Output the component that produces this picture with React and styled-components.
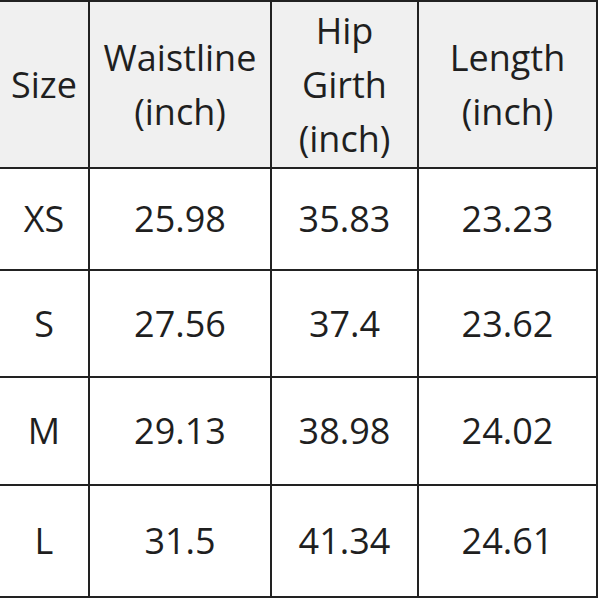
import React from "react";
import styled, { createGlobalStyle } from "styled-components";

const ROWS = [
  ["XS", "25.98", "35.83", "23.23", 102],
  ["S", "27.56", "37.4", "23.62", 107],
  ["M", "29.13", "38.98", "24.02", 108],
  ["L", "31.5", "41.34", "24.61", 112],
];

const GlobalStyle = createGlobalStyle`
  body {
    margin: 0;
    background: #ffffff;
  }
`;

const Page = styled.div`
  width: 600px;
  height: 600px;
  overflow: hidden;
  background: #fff;
`;

const SizeTable = styled.table`
  border-collapse: collapse;
  table-layout: fixed;
  width: 597px;
  margin-top: 0;
  font-family: "Open Sans", "Noto Sans", sans-serif;
  font-size: 36px;
  color: #1f1f1f;
`;

const HeadCell = styled.th`
  font-weight: 400;
  background: #f0f0f0;
  border: 2px solid #222;
  border-left: ${(p) => (p.$first ? "none" : "2px solid #222")};
  text-align: center;
  vertical-align: middle;
  line-height: 54px;
  height: 165px;
  padding: 0;
`;

const Cell = styled.td`
  border: 2px solid #222;
  border-left: ${(p) => (p.$first ? "none" : "2px solid #222")};
  text-align: center;
  vertical-align: middle;
  padding: 0;
  line-height: 1;
`;

const App = () => {
  return (
    <Page>
      <GlobalStyle />
      <SizeTable>
        <colgroup>
          <col style={{ width: 89 }} />
          <col style={{ width: 182 }} />
          <col style={{ width: 147 }} />
          <col style={{ width: 179 }} />
        </colgroup>
        <thead>
          <tr>
            <HeadCell $first>Size</HeadCell>
            <HeadCell>Waistline<br />(inch)</HeadCell>
            <HeadCell>Hip<br />Girth<br />(inch)</HeadCell>
            <HeadCell>Length<br />(inch)</HeadCell>
          </tr>
        </thead>
        <tbody>
          {ROWS.map(([size, waist, hip, len, h]) => (
            <tr key={size} style={{ height: h }}>
              <Cell $first>{size}</Cell>
              <Cell>{waist}</Cell>
              <Cell>{hip}</Cell>
              <Cell>{len}</Cell>
            </tr>
          ))}
        </tbody>
      </SizeTable>
    </Page>
  );
};

export default App;
